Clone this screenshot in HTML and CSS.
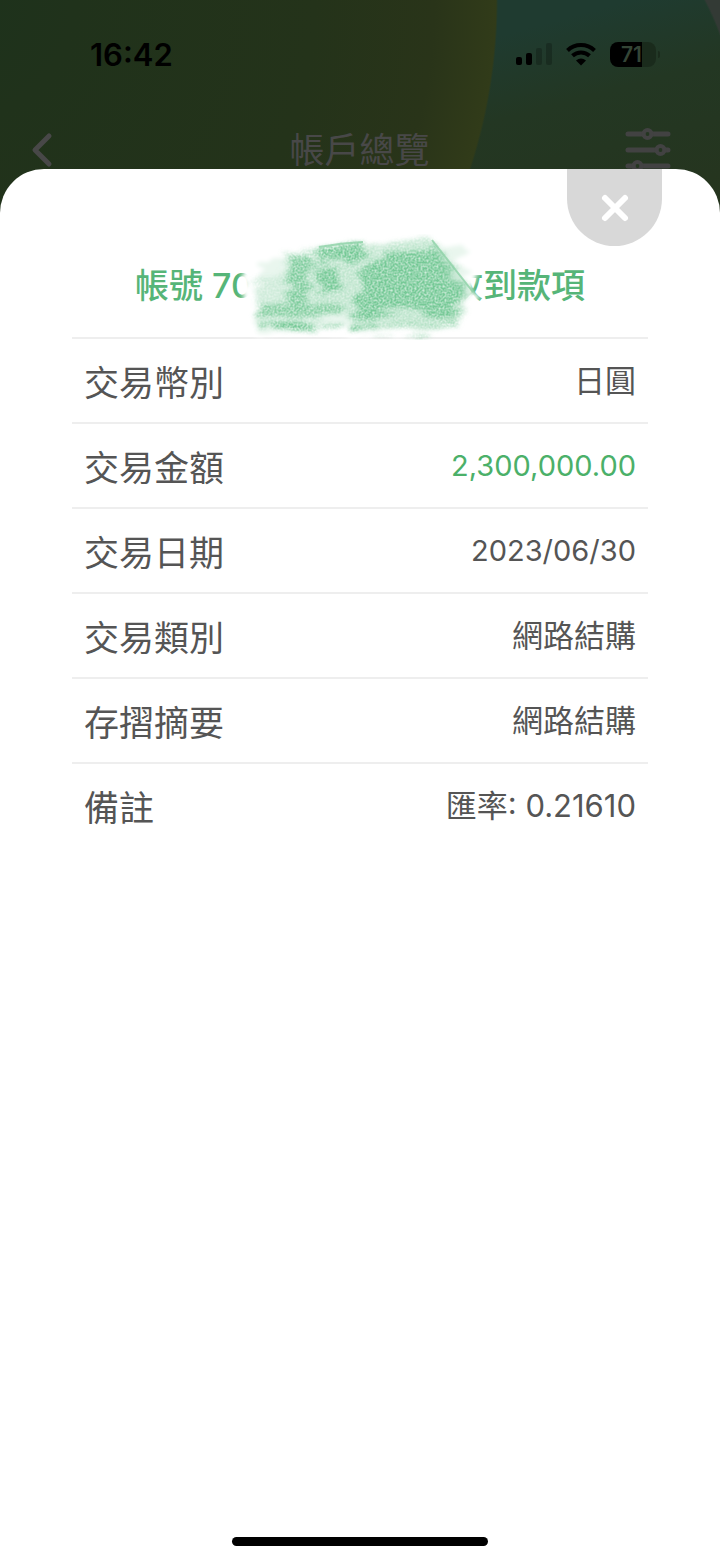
FILE: index.html
```html
<!DOCTYPE html>
<html lang="zh-Hant">
	<head>
		<meta charset="UTF-8">
		<meta name="viewport" content="width=device-width, initial-scale=1">
		<title>帳戶總覽</title>
		<link rel="stylesheet" href="styles.css">
	</head>

	<body>
		<!-- dimmed page behind the sheet -->
		<header class="backdrop">
			<div class="statusBar">
				<span class="time">16:42</span>
				<div class="statusIcons">
					<svg class="signal" width="36" height="24" viewBox="0 0 36 24">
						<rect x="0" y="15" width="6" height="8" rx="2"/>
						<rect x="10" y="11" width="6" height="12" rx="2"/>
						<rect x="20" y="6" width="6" height="17" rx="2" opacity=".22"/>
						<rect x="30" y="1" width="6" height="22" rx="2" opacity=".22"/>
					</svg>
					<svg class="wifi" width="32" height="24" viewBox="0 0 32 24">
						<path d="M2.500 8.500A19.500 19.500 0 0 1 29.500 8.500M7.500 13.800A12.500 12.500 0 0 1 24.500 13.800" fill="none" stroke="#000" stroke-width="4"/>
						<path d="M11 18.500Q16 14.500 21 18.500L16 23.500Z"/>
					</svg>
					<div class="battery">
						<span class="level">71</span>
						<span class="tip"></span>
					</div>
				</div>
			</div>
			<nav class="navBar">
				<button class="navButton" aria-label="返回">
					<svg width="24" height="38" viewBox="0 0 24 38">
						<path d="M19 5L5 19L19 33" fill="none" stroke="#484848" stroke-width="5" stroke-linecap="round" stroke-linejoin="round"/>
					</svg>
				</button>
				<h1 class="pageTitle">帳戶總覽</h1>
				<button class="navButton" aria-label="篩選">
					<svg width="46" height="46" viewBox="0 0 46 46" fill="none" stroke="#424242" stroke-width="5" stroke-linecap="round">
						<path d="M3 7H18M27 7H43M3 23H31M40 23H43M3 39H8M17 39H43"/>
						<g stroke-width="4">
							<circle cx="22.500" cy="7" r="4"/>
							<circle cx="35.500" cy="23" r="4"/>
							<circle cx="12.500" cy="39" r="4"/>
						</g>
					</svg>
				</button>
			</nav>
		</header>

		<main class="sheet">
			<button class="closeButton" aria-label="關閉">
				<svg width="30" height="30" viewBox="0 0 30 30">
					<path d="M5 5L25 25M25 5L5 25" stroke="#fff" stroke-width="6" stroke-linecap="round"/>
				</svg>
			</button>

			<h2 class="sheetTitle">
				<span>帳號 70</span>
				<span class="masked">
					<!-- crayon strokes over the account number -->
					<svg class="scribble" width="250" height="106" viewBox="0 0 250 106">
						<defs>
							<filter id="soft" x="-10%" y="-10%" width="120%" height="120%">
								<feTurbulence type="fractalNoise" baseFrequency=".02 .12" numOctaves="3" seed="4" result="wave"/>
								<feDisplacementMap in="SourceGraphic" in2="wave" scale="24" xChannelSelector="R" yChannelSelector="A" result="edge"/>
								<feGaussianBlur in="edge" stdDeviation="2"/>
							</filter>
							<filter id="crayon" x="-10%" y="-10%" width="120%" height="120%">
								<feTurbulence type="fractalNoise" baseFrequency=".02 .14" numOctaves="4" seed="9" result="wave"/>
								<feDisplacementMap in="SourceGraphic" in2="wave" scale="24" xChannelSelector="R" yChannelSelector="A" result="edge"/>
								<feGaussianBlur in="edge" stdDeviation="2" result="blurred"/>
								<feTurbulence type="fractalNoise" baseFrequency=".5" numOctaves="2" seed="2"/>
								<feColorMatrix values="0 0 0 0 0  0 0 0 0 0  0 0 0 0 0  1.500 0 0 0 0" result="grain"/>
								<feComposite in="blurred" in2="grain" operator="in"/>
							</filter>
						</defs>
						<g filter="url(#soft)">
							<path d="M6 22L60 8L205 4L242 18L238 68L226 98L14 100L4 80Z" fill="#fff"/>
							<path d="M20 32L52 20L222 8L232 54L222 90L110 95L20 96Z" fill="#e9f6ee"/>
						</g>
						<!-- pale base, then the darker patches -->
						<g filter="url(#crayon)" fill="#76c996">
							<path d="M48 16L196 8L234 58L222 92L116 90L112 76L22 78L46 70Z" opacity=".35"/>
							<path d="M124 30L150 20L196 12L230 58L222 72L214 86L166 76L120 82Z"/>
							<path d="M52 26L72 24L72 74L52 72Z" opacity=".85"/>
							<path d="M82 13L130 10L126 22L84 26ZM80 32L104 30L102 54L90 62L80 44Z"/>
							<path d="M22 74L104 70L106 80L24 84Z" opacity=".8"/>
							<path d="M22 90L106 88L106 93L22 98ZM116 88L136 86L140 95L116 97Z"/>
							<path d="M136 91L222 88L220 97L136 97Z" opacity=".5"/>
							<path d="M18 40L46 38L50 76L18 78Z" opacity=".22"/>
						</g>
						<path d="M195 6L236 58L228 66L204 38Z" fill="#8fd2a8" opacity=".3"/>
						<path d="M195 6L236 58" fill="none" stroke="#8fd2a8" stroke-width="2" opacity=".8"/>
						<path d="M82 13Q104 9 126 8" fill="none" stroke="#8fd2a8" stroke-width="2" opacity=".8"/>
					</svg>
				</span>
				<span>收到款項</span>
			</h2>

			<dl class="details">
				<div class="row"><dt>交易幣別</dt><dd>日圓</dd></div>
				<div class="row"><dt>交易金額</dt><dd class="number amount">2,300,000.00</dd></div>
				<div class="row"><dt>交易日期</dt><dd class="number">2023/06/30</dd></div>
				<div class="row"><dt>交易類別</dt><dd>網路結購</dd></div>
				<div class="row"><dt>存摺摘要</dt><dd>網路結購</dd></div>
				<div class="row"><dt>備註</dt><dd>匯率: 0.21610</dd></div>
			</dl>

			<div class="homeBar"></div>
		</main>
	</body>
</html>
```
FILE: styles.css
```css
* {
	box-sizing: border-box;
}
body {
	margin: 0;
	min-height: 100vh;
	display: flex;
	flex-direction: column;
	font-family: Inter, "Noto Sans CJK TC", sans-serif;
	color: #555555;
	background-color: #ffffff;
}
button {
	padding: 0;
	border: none;
	background: none;
}
svg {
	display: block;
}

/* dimmed page */
.backdrop {
	height: 230px;
	background:
		radial-gradient(circle at -46px 0, #1d321c 0, #20321b 120px, #24331a 360px, #293419 480px, #313b19 542px, transparent 544px),
		radial-gradient(circle at 460px 130px, transparent 276px, #333a35 278px),
		linear-gradient(165deg, #1f3b30 40%, #233723 60%, #26341d 100%);
}
.statusBar {
	height: 108px;
	padding: 0 64px 0 90px;
	display: flex;
	justify-content: space-between;
	align-items: center;
	color: #000000;
}
.time {
	font-size: 31px;
	font-weight: 600;
}
.statusIcons {
	display: flex;
	align-items: center;
	gap: 13px;
}
.battery {
	position: relative;
	width: 46px;
	height: 25px;
	border-radius: 8px;
	background: linear-gradient(to right, #000000 70%, #1a2b1c 70%);
	text-align: center;
}
.level {
	display: block;
	padding-right: 3px;
	font-size: 21px;
	font-weight: 600;
	line-height: 25px;
	color: #344536;
}
.tip {
	position: absolute;
	right: -4px;
	top: 9px;
	width: 2px;
	height: 7px;
	border-radius: 0 2px 2px 0;
	background-color: #1a2b1c;
}
.navBar {
	height: 84px;
	padding: 0 49px 0 30px;
	display: grid;
	grid-template-columns: 68px 1fr 68px;
	align-items: center;
	justify-items: center;
}
.navButton:first-child {
	justify-self: start;
}
.navButton:last-child {
	justify-self: end;
}
.pageTitle {
	margin: 0 0 0 18px;
	font-size: 35px;
	font-weight: 400;
	line-height: 48px;
	color: #484848;
}

/* white sheet */
.sheet {
	position: relative;
	flex: 1;
	margin-top: -61px;
	padding: 93px 10% 15px;
	display: flex;
	flex-direction: column;
	border-radius: 44px 44px 0 0;
	background-color: #ffffff;
}
.closeButton {
	position: absolute;
	top: 0;
	right: 58px;
	width: 95px;
	height: 77px;
	display: flex;
	align-items: center;
	justify-content: center;
	border-radius: 0 0 48px 48px;
	background-color: #d8d8d8;
}
.sheetTitle {
	margin: 0;
	height: 75px;
	display: flex;
	justify-content: center;
	font-size: 34px;
	font-weight: 500;
	line-height: 48px;
	color: #56b578;
}
.masked {
	position: relative;
	width: 196px;
}
.scribble {
	position: absolute;
	left: -16px;
	top: -28px;
}
.details {
	margin: 0;
}
.row {
	height: 85px;
	padding: 4px 12px 0;
	display: flex;
	justify-content: space-between;
	align-items: center;
	border-top: 2px solid #eeeeee;
}
dt {
	font-size: 35px;
	line-height: 48px;
}
dd {
	margin: 0;
	padding-bottom: 4px;
	font-size: 31px;
	line-height: 48px;
}
.number {
	font-size: 29px;
}
.amount {
	color: #4bb069;
}
.homeBar {
	width: 256px;
	height: 9px;
	margin: auto auto 0;
	border-radius: 5px;
	background-color: #000000;
}
```
